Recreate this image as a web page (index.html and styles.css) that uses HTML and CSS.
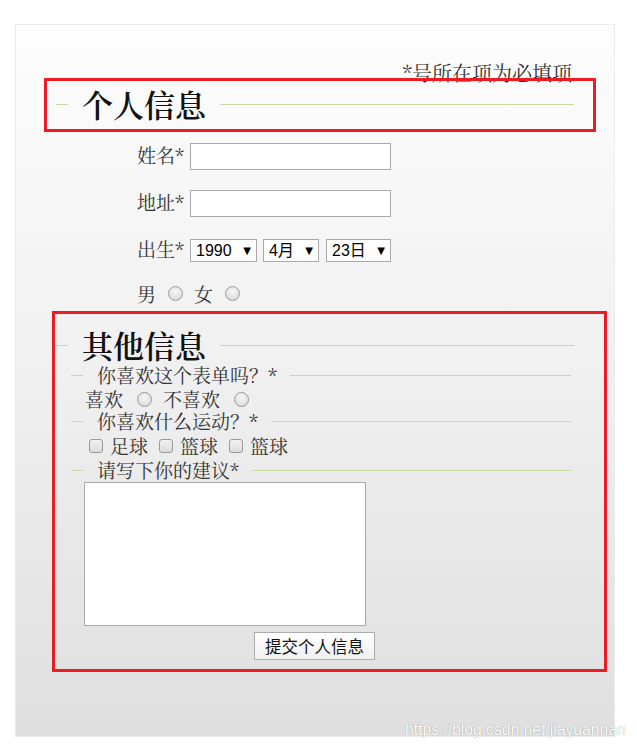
FILE: index.html
```html
<!DOCTYPE html>
<html lang="zh">
<head>
<meta charset="utf-8">
<title>表单</title>
<link rel="stylesheet" href="styles.css">
</head>
<body>
<form class="page">
  <p class="note">*号所在项为必填项</p>

  <section class="group">
    <div class="head">
      <span class="tick"></span><h2 class="legend">个人信息</h2><span class="rule"></span>
    </div>
    <div class="row row-first">
      <label class="lab">姓名*</label><input class="txt" type="text">
    </div>
    <div class="row">
      <label class="lab">地址*</label><input class="txt" type="text">
    </div>
    <div class="row">
      <label class="lab">出生*</label>
      <span class="sel sel-year"><select><option>1990</option></select><span class="arr">▼</span></span>
      <span class="sel sel-month"><select><option>4月</option></select><span class="arr">▼</span></span>
      <span class="sel sel-day"><select><option>23日</option></select><span class="arr">▼</span></span>
    </div>
    <div class="row row-sex">
      <span class="opt">男</span><input class="radio" type="radio" name="sex">
      <span class="opt">女</span><input class="radio" type="radio" name="sex">
    </div>
  </section>

  <section class="group group-other">
    <div class="head head-other">
      <span class="tick"></span><h2 class="legend">其他信息</h2><span class="rule"></span>
    </div>
    <div class="sub">
      <div class="subhead">
        <span class="tick"></span><h3 class="sublegend">你喜欢这个表单吗？*</h3><span class="rule"></span>
      </div>
      <div class="subrow subrow-like">
        <span class="opt">喜欢</span><input class="radio radio-like" type="radio" name="like">
        <span class="opt">不喜欢</span><input class="radio radio-like" type="radio" name="like">
      </div>
      <div class="subhead">
        <span class="tick"></span><h3 class="sublegend">你喜欢什么运动？*</h3><span class="rule"></span>
      </div>
      <div class="subrow subrow-sport">
        <input class="check" type="checkbox"><span class="opt">足球</span>
        <input class="check" type="checkbox"><span class="opt">篮球</span>
        <input class="check" type="checkbox"><span class="opt">篮球</span>
      </div>
      <div class="subhead subhead-last">
        <span class="tick"></span><h3 class="sublegend">请写下你的建议*</h3><span class="rule"></span>
      </div>
      <textarea class="area"></textarea>
      <button class="submit" type="button">提交个人信息</button>
    </div>
  </section>
</form>

<div class="mark mark-one"></div>
<div class="mark mark-two"></div>
<div class="watermark">https://blog.csdn.net/jiayuannan</div>
</body>
</html>
```

FILE: styles.css
```css
html, body {
  margin: 0;
  padding: 0;
  background: #ffffff;
}

body {
  position: relative;
  width: 637px;
  height: 750px;
  overflow: hidden;
  font-family: "Noto Serif CJK SC", "Noto Sans CJK SC", serif;
  color: #333333;
}

.page {
  box-sizing: border-box;
  width: 600px;
  height: 713px;
  margin: 24px 0 0 15px;
  padding: 0 40px;
  border: 1px solid #ececec;
  background: linear-gradient(to bottom, #fdfdfd 0%, #f1f1f1 45%, #dfdfdf 100%);
}

.note {
  margin: 37px 0 0 0;
  padding-right: 2px;
  font-size: 20px;
  line-height: 22px;
  text-align: right;
  color: #333333;
}

/* fieldset-like headings */
.head {
  display: flex;
  align-items: center;
  height: 40px;
}

.head-other {
  height: 38px;
  margin-top: 19px;
}

.tick {
  width: 12px;
  border-top: 1px solid #c6dba0;
}

.rule {
  flex: 1;
  border-top: 1px solid #c6dba0;
}

.legend {
  margin: 0;
  padding: 0 14px;
  font-size: 31px;
  line-height: 40px;
  font-weight: 600;
  color: #111111;
}

/* personal rows */
.row {
  display: flex;
  align-items: center;
  height: 27px;
  margin-top: 20px;
  padding-left: 81px;
  font-size: 19px;
}

.row-first {
  margin-top: 19px;
}

.row-sex {
  margin-top: 16px;
}

.lab {
  width: 53px;
  line-height: 22px;
  position: relative;
  top: -2px;
}

.txt {
  box-sizing: border-box;
  width: 201px;
  height: 27px;
  margin: 0;
  border: 1px solid #a9a9a9;
  background: #ffffff;
}

.sel {
  box-sizing: border-box;
  display: inline-flex;
  align-items: center;
  height: 23px;
  margin-right: 6px;
  padding: 0 5px 0 5px;
  border: 1px solid #a9a9a9;
  background: #ffffff;
}

.sel select {
  appearance: none;
  -webkit-appearance: none;
  flex: 1;
  min-width: 0;
  margin: 0;
  padding: 0;
  border: 0;
  background: transparent;
  font-family: "Liberation Sans", "Noto Sans CJK SC", sans-serif;
  font-size: 16px;
  color: #000000;
}

.arr {
  font-family: "DejaVu Sans", sans-serif;
  font-size: 10px;
  color: #000000;
}

.sel-year { width: 67px; }
.sel-month { width: 56px; margin-right: 7px; }
.sel-day { width: 65px; }

.opt {
  line-height: 22px;
}

.radio {
  appearance: none;
  -webkit-appearance: none;
  box-sizing: border-box;
  width: 15px;
  height: 15px;
  margin: 0 11px 0 12px;
  border: 1px solid #9a9a9a;
  border-radius: 50%;
  background: radial-gradient(circle at 50% 35%, #f6f6f6 0%, #e4e4e4 55%, #cfcfcf 100%);
}

/* other info */
.sub {
  padding: 0 3px 0 15px;
}

.subhead {
  display: flex;
  align-items: center;
  height: 22px;
}

.sublegend {
  margin: 0;
  padding: 0 13px 0 14px;
  font-size: 19px;
  line-height: 22px;
  font-weight: 400;
  color: #333333;
}

.subrow {
  display: flex;
  align-items: center;
  height: 22px;
  font-size: 19px;
}

.subrow-like {
  margin-top: 2px;
  padding-left: 14px;
}

.radio-like {
  width: 15px;
  height: 15px;
  margin: 0 11px 0 14px;
}

.subrow-sport {
  margin-top: 3px;
  padding-left: 18px;
}

.check {
  appearance: none;
  -webkit-appearance: none;
  box-sizing: border-box;
  width: 14px;
  height: 14px;
  margin: 0 7px 0 0;
  border: 1px solid #9a9a9a;
  border-radius: 3px;
  background: linear-gradient(to bottom, #f2f2f2 0%, #dcdcdc 100%);
}

.subrow-sport .opt {
  margin-right: 11px;
}

.subhead-last {
  margin-top: 2px;
}

.area {
  display: block;
  box-sizing: border-box;
  width: 282px;
  height: 144px;
  margin: 1px 0 0 13px;
  border: 1px solid #a9a9a9;
  background: #ffffff;
  resize: none;
}

.submit {
  display: block;
  box-sizing: border-box;
  width: 121px;
  height: 28px;
  margin: 6px 0 0 183px;
  padding: 0;
  border: 1px solid #adadad;
  border-radius: 0;
  background: linear-gradient(to bottom, #ffffff 0%, #f0f0f0 100%);
  font-family: "Noto Sans CJK SC", sans-serif;
  font-size: 16.5px;
  color: #111111;
}

/* annotation boxes */
.mark {
  position: absolute;
  box-sizing: border-box;
  border: 3px solid #ed1c24;
}

.mark-one {
  left: 44px;
  top: 78px;
  width: 552px;
  height: 54px;
}

.mark-two {
  left: 52px;
  top: 311px;
  width: 555px;
  height: 361px;
}

.watermark {
  position: absolute;
  left: 405px;
  top: 721px;
  font-family: "Liberation Sans", sans-serif;
  font-size: 15.7px;
  line-height: 18px;
  color: #ffffff;
  text-shadow: 0 0 1px rgba(0, 0, 0, 0.45);
}
```
